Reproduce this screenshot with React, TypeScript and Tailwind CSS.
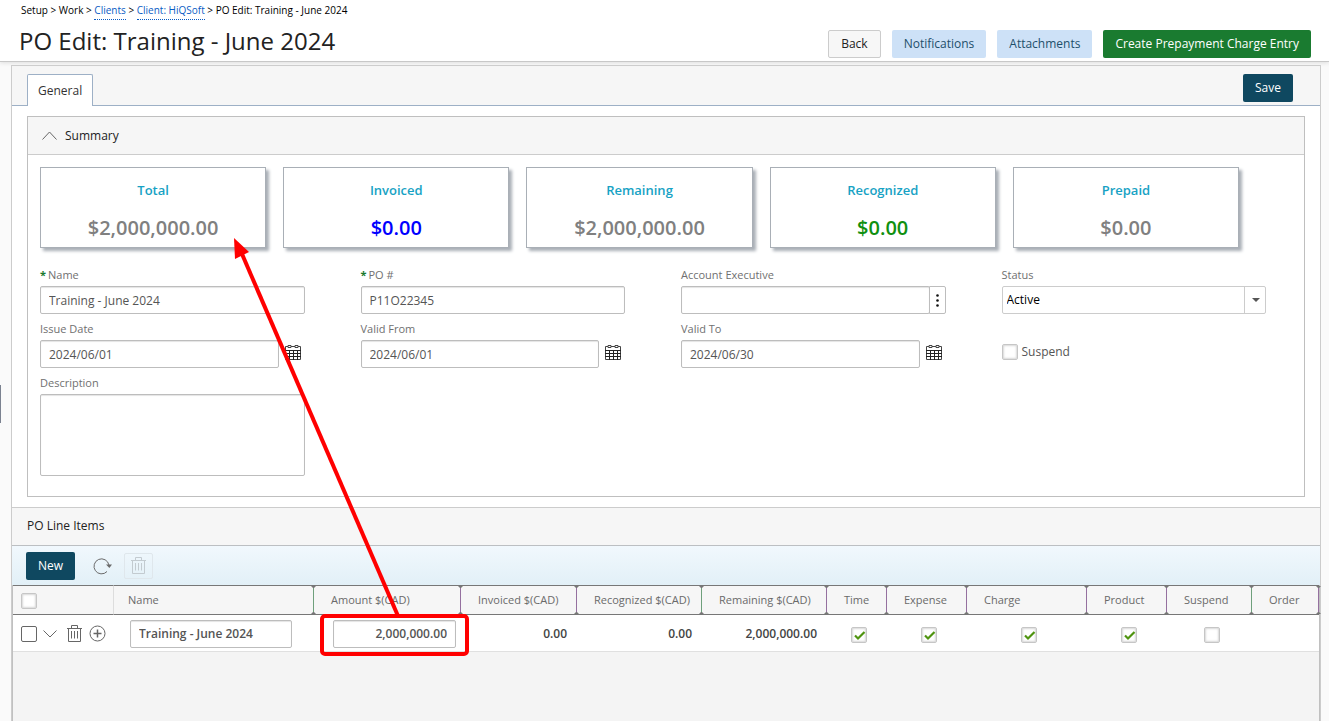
import React from "react";

const cards = [
  { title: "Total", value: "$2,000,000.00", color: "text-[#808080]" },
  { title: "Invoiced", value: "$0.00", color: "text-[#0000ff]" },
  { title: "Remaining", value: "$2,000,000.00", color: "text-[#808080]" },
  { title: "Recognized", value: "$0.00", color: "text-[#109010]" },
  { title: "Prepaid", value: "$0.00", color: "text-[#808080]" },
];

const columns = [
  { title: "Name", width: "w-[200px]", pad: "pl-[14px]", line: "text-[#6fa07c]" },
  { title: "Amount $(CAD)", width: "w-[147px]", pad: "pl-[17px]", line: "text-[#95709f]" },
  { title: "Invoiced $(CAD)", width: "w-[116px]", pad: "pl-[17px]", line: "text-[#95709f]" },
  { title: "Recognized $(CAD)", width: "w-[125px]", pad: "pl-[17px]", line: "text-[#6fa07c]" },
  { title: "Remaining $(CAD)", width: "w-[125px]", pad: "pl-[17px]", line: "text-[#95709f]" },
  { title: "Time", width: "w-[60px]", pad: "pl-[17px]", line: "text-[#95709f]" },
  { title: "Expense", width: "w-[80px]", pad: "pl-[17px]", line: "text-[#95709f]" },
  { title: "Charge", width: "w-[120px]", pad: "pl-[17px]", line: "text-[#95709f]" },
  { title: "Product", width: "w-[80px]", pad: "pl-[17px]", line: "text-[#95709f]" },
  { title: "Suspend", width: "w-[85px]", pad: "pl-[17px]", line: "text-[#6fa07c]" },
  { title: "Order", width: "", pad: "pl-[17px]", line: "text-[#95709f]" },
];

const inputClass =
  "h-7 w-full min-w-0 rounded-[2px] border border-[#bdbdbd] bg-white px-2 text-xs text-[#555] shadow-[inset_0_1px_1px_#e4e4e4] outline-none";

const CalendarIcon = () => (
  <svg width="16" height="17" viewBox="0 0 16 17" fill="none" stroke="#444">
    <path d="M0.5 2.5h15v13h-15z" />
    <path d="M0 6.5h16M0 9.5h16M0 12.5h16M4.5 7v9M8.5 7v9M12.5 7v9" stroke="#222" />
    <path d="M3 1.500h3v2h-3zM10 1.500h3v2h-3z" fill="#fff" />
  </svg>
);

const TrashIcon = () => (
  <svg width="15" height="17" viewBox="0 0 15 17" fill="none" stroke="currentColor">
    <path d="M0 3.5h15M4.5 3.500v-3h6v3M1.500 3.500v13h12v-13" />
    <path d="M4.500 6v7.500M7.500 6v7.500M10.500 6v7.500" />
  </svg>
);

const RefreshIcon = () => (
  <svg width="19" height="18" viewBox="0 0 19 18" fill="none" stroke="#6b6b6b">
    <path d="M14 14.500A7.500 7.500 0 1 1 15.900 8" />
    <path d="M13 7.500h6l-2.600 3.500z" fill="#6b6b6b" stroke="none" />
  </svg>
);

const Check = ({
  label,
  id,
  checked = false,
  dark = false,
}: {
  label?: string;
  id?: string;
  checked?: boolean;
  dark?: boolean;
}) => (
  <span className="inline-grid size-4 place-items-center align-middle">
    <input
      type="checkbox"
      id={id}
      aria-label={label}
      defaultChecked={checked}
      className={
        dark
          ? "peer col-start-1 row-start-1 size-4 appearance-none rounded-[2px] border border-[#666] bg-white"
          : "peer col-start-1 row-start-1 size-4 appearance-none rounded-[2px] border border-[#c6c6c6] bg-white shadow-[inset_0_0_2px_1px_#d8d8d8]"
      }
    />
    <svg
      className="pointer-events-none invisible col-start-1 row-start-1 peer-checked:visible"
      width="16"
      height="16"
      viewBox="0 0 16 16"
      fill="none"
      stroke="#4f9410"
      strokeWidth="2.2"
    >
      <path d="M4 8.500l3 3L13.500 5" />
    </svg>
  </span>
);

const Field = ({
  id,
  label,
  required = false,
  children,
}: {
  id: string;
  label: string;
  required?: boolean;
  children: React.ReactNode;
}) => (
  <div>
    <label htmlFor={id} className="flex h-[22px] items-center gap-[2px] text-[11px] text-[#707070]">
      {required && <span className="font-bold text-[#1a7a2e]">*</span>}
      <span className={required ? "font-medium" : ""}>{label}</span>
    </label>
    {children}
  </div>
);

const DateField = ({ id, label, value }: { id: string; label: string; value: string }) => (
  <Field id={id} label={label}>
    <div className="flex items-start gap-[6px] pr-1">
      <input id={id} className={inputClass} defaultValue={value} />
      <button aria-label={"Pick " + label} className="mt-1 shrink-0">
        <CalendarIcon />
      </button>
    </div>
  </Field>
);

const Header = () => (
  <header className="relative z-10 h-[62px] border-b border-[#c8c8c8] bg-white shadow-[0_1px_4px_#ddd]">
    <nav className="h-5 pl-[21px] text-[10px] leading-5 text-black">
      Setup &gt; Work &gt;{" "}
      <a href="#clients" className="inline-block h-5 border-b border-dotted border-[#0a5cc4] align-top text-[#0a5cc4]">
        Clients
      </a>{" "}
      &gt;{" "}
      <a href="#client" className="inline-block h-5 border-b border-dotted border-[#0a5cc4] align-top text-[#0a5cc4]">
        Client: HiQSoft
      </a>{" "}
      &gt; PO Edit: Training - June 2024
    </nav>
    <div className="flex items-start justify-between pr-[18px] pl-[19px]">
      <h1 className="text-2xl leading-[42px] text-[#222]">PO Edit: Training - June 2024</h1>
      <div className="flex gap-[11px] pt-[10px] text-xs">
        <button className="h-7 rounded-[2px] border border-[#ccc] bg-[#f7f7f7] px-3 text-[#222]">Back</button>
        <button className="h-7 rounded-[2px] bg-[#cde1f7] px-3 text-[#1d4f6b]">Notifications</button>
        <button className="h-7 rounded-[2px] bg-[#cde1f7] px-3 text-[#1d4f6b]">Attachments</button>
        <button className="h-7 rounded-[2px] bg-[#1a7b30] px-3 font-medium text-white">
          Create Prepayment Charge Entry
        </button>
      </div>
    </div>
  </header>
);

const Summary = () => (
  <section className="mx-[15px] my-[10px] border border-[#bfbfbf] bg-white">
    <h2 className="flex h-[38px] items-center gap-2 border-b border-[#ccc] bg-[#f6f6f6] pl-[14px] text-xs font-medium text-[#222]">
      <svg width="15" height="9" viewBox="0 0 15 9" fill="none" stroke="#666">
        <path d="M0.500 8.500L7.500 1L14.500 8.500" />
      </svg>
      Summary
    </h2>
    <div className="grid grid-cols-5 gap-[17px] pt-3 pr-[65px] pl-3">
      {cards.map((card) => (
        <div
          key={card.title}
          className="h-[81px] border border-[#a9afb6] bg-white text-center shadow-[3px_3px_3px_#a9afb6]"
        >
          <div className="pt-3 text-[13px] leading-5 font-semibold text-[#17a2c4]">{card.title}</div>
          <div className={"pt-[14px] text-xl leading-7 font-semibold " + card.color}>{card.value}</div>
        </div>
      ))}
    </div>
    <div className="grid grid-cols-4 gap-x-14 gap-y-1 pt-4 pr-[38px] pb-5 pl-3">
      <Field id="name" label="Name" required>
        <input id="name" className={inputClass} defaultValue="Training - June 2024" />
      </Field>
      <Field id="po" label="PO #" required>
        <input id="po" className={inputClass} defaultValue="P11O22345" />
      </Field>
      <Field id="executive" label="Account Executive">
        <div className="flex">
          <input id="executive" className={inputClass} />
          <button
            aria-label="Select account executive"
            className="-ml-px flex h-7 w-[17px] shrink-0 items-center justify-center rounded-r-[2px] border border-[#bdbdbd] bg-white"
          >
            <svg width="3" height="13" viewBox="0 0 3 13" fill="#111">
              <circle cx="1.500" cy="1.500" r="1.300" />
              <circle cx="1.500" cy="6.500" r="1.300" />
              <circle cx="1.500" cy="11.500" r="1.300" />
            </svg>
          </button>
        </div>
      </Field>
      <Field id="status" label="Status">
        <div className="grid">
          <select
            id="status"
            className="col-start-1 row-start-1 h-7 w-full appearance-none rounded-[2px] border border-[#ccc] bg-white pl-1 text-xs text-black"
          >
            <option>Active</option>
          </select>
          <span className="pointer-events-none col-start-1 row-start-1 flex h-7 w-[22px] items-center justify-center justify-self-end border-l border-[#ccc]">
            <svg width="8" height="4" viewBox="0 0 8 4" fill="#555">
              <path d="M0 0h8L4 4z" />
            </svg>
          </span>
        </div>
      </Field>
      <DateField id="issue" label="Issue Date" value="2024/06/01" />
      <DateField id="from" label="Valid From" value="2024/06/01" />
      <DateField id="to" label="Valid To" value="2024/06/30" />
      <div className="mt-[22px] flex h-6 items-center gap-1 text-xs text-[#555]">
        <Check id="suspend" />
        <label htmlFor="suspend">Suspend</label>
      </div>
      <Field id="description" label="Description">
        <textarea
          id="description"
          className="block h-[82px] w-full resize-none rounded-[2px] border border-[#bdbdbd] bg-white shadow-[inset_0_1px_1px_#e4e4e4]"
        />
      </Field>
    </div>
  </section>
);

const LineItems = () => (
  <section className="flex grow flex-col border-t border-[#ccc] bg-[#f4f4f4]">
    <h2 className="h-[38px] border-b border-[#bcbfc2] bg-[#f6f6f6] pl-[15px] text-xs leading-9 font-medium text-[#222]">
      PO Line Items
    </h2>
    <div className="flex h-[39px] items-center bg-linear-to-b from-[#f1f8fd] to-[#e2f0f7] pl-[14px]">
      <button className="h-7 rounded-[2px] bg-[#0f4860] px-3 text-xs font-medium text-white">New</button>
      <button aria-label="Refresh" className="ml-[18px]">
        <RefreshIcon />
      </button>
      <button
        aria-label="Delete selected"
        disabled
        className="ml-3 flex h-[26px] w-[29px] items-center justify-center rounded-[2px] border border-[#dfe7ec] text-[#c3cbd0]"
      >
        <TrashIcon />
      </button>
    </div>
    <div className="grow border-x border-[#c0c0c0]">
      <table className="w-full table-fixed border-separate border-spacing-0 text-left text-[11px] text-[#6a6a6a]">
        <thead>
          <tr className="h-[30px]">
            <th className="w-[101px] border-y border-r border-y-[#777] border-r-[#ddd] bg-[#f6f6f6] p-0 pl-2">
              <Check label="Select all" />
            </th>
            {columns.map((col) => (
              <th
                key={col.title}
                className={"relative border-y border-[#777] bg-[#f6f6f6] p-0 font-normal " + col.width + " " + col.pad}
              >
                {col.title}
                <svg
                  className={"absolute top-0 -right-[2px] z-10 " + col.line}
                  width="5"
                  height="28"
                  viewBox="0 0 5 28"
                  fill="currentColor"
                >
                  <path d="M2 0h1v28h-1z" />
                  <path d="M0 0h5L3 2h-1zM0 28h5L3 26h-1z" fill="#777" />
                </svg>
              </th>
            ))}
          </tr>
        </thead>
        <tbody className="text-xs font-semibold text-[#444]">
          <tr className="h-[37px] bg-white">
            <td className="border-b border-[#e0e0e0] p-0 pt-px pl-2">
              <div className="flex items-center text-[#666]">
                <Check label="Select row" dark />
                <button aria-label="Expand row" className="ml-[6px]">
                  <svg width="14" height="8" viewBox="0 0 14 8" fill="none" stroke="currentColor">
                    <path d="M0.500 0.500L7 7L13.500 0.500" />
                  </svg>
                </button>
                <button aria-label="Delete row" className="ml-[10px]">
                  <TrashIcon />
                </button>
                <button aria-label="Add row" className="ml-[7px]">
                  <svg width="17" height="17" viewBox="0 0 17 17" fill="none" stroke="currentColor">
                    <circle cx="8.500" cy="8.500" r="7.500" />
                    <path d="M4.500 8.500h8M8.500 4.500v8" strokeWidth="1.500" />
                  </svg>
                </button>
              </div>
            </td>
            <td className="border-b border-[#e0e0e0] p-0 pt-px pr-[22px] pl-4">
              <input aria-label="Item name" className={inputClass} defaultValue="Training - June 2024" />
            </td>
            <td className="border-b border-[#e0e0e0] p-0 pt-px pr-[5px] pl-[19px]">
              <input aria-label="Amount" className={inputClass + " text-right"} defaultValue="2,000,000.00" />
            </td>
            <td className="border-b border-[#e0e0e0] p-0 pt-[2px] pr-[10px] text-right">0.00</td>
            <td className="border-b border-[#e0e0e0] p-0 pt-[2px] pr-[10px] text-right">0.00</td>
            <td className="border-b border-[#e0e0e0] p-0 pt-[2px] pr-[10px] text-right">2,000,000.00</td>
            <td className="border-b border-[#e0e0e0] p-0 pt-1 pl-1 text-center">
              <Check label="Time" checked />
            </td>
            <td className="border-b border-[#e0e0e0] p-0 pt-1 pl-1 text-center">
              <Check label="Expense" checked />
            </td>
            <td className="border-b border-[#e0e0e0] p-0 pt-1 pl-1 text-center">
              <Check label="Charge" checked />
            </td>
            <td className="border-b border-[#e0e0e0] p-0 pt-1 pl-1 text-center">
              <Check label="Product" checked />
            </td>
            <td className="border-b border-[#e0e0e0] p-0 pt-1 pl-1 text-center">
              <Check label="Suspend" />
            </td>
            <td className="border-b border-[#e0e0e0] p-0" />
          </tr>
        </tbody>
      </table>
    </div>
  </section>
);

// red marker over the page: framed amount and the arrow up to the total
const Marker = () => (
  <svg
    className="pointer-events-none absolute top-0 left-0 z-20"
    width="480"
    height="670"
    viewBox="0 0 480 670"
    fill="none"
    stroke="#ff0000"
    strokeWidth="4"
  >
    <path d="M398 616L242 254" />
    <path d="M234 238L249 252L235 259z" fill="#ff0000" stroke="none" />
    <rect x="322" y="616" width="145" height="38" rx="3" />
  </svg>
);

export default function App() {
  return (
    <div className="relative flex min-h-screen flex-col overflow-hidden bg-[#fafafa] font-['Open_Sans',sans-serif]">
      <Header />
      <div className="absolute top-[385px] left-0 h-[38px] w-px bg-[#7b8290]" />
      <main className="mt-[3px] mr-2 ml-[11px] flex grow flex-col border border-b-0 border-[#ccc] bg-white">
        <div className="flex h-10 items-start justify-between border-b border-[#9db0c6] bg-[#f6f6f6] pt-2 pr-[27px] pl-[15px]">
          <button className="h-8 rounded-t-[2px] border border-b-0 border-[#9db0c6] bg-white px-[10px] text-xs font-medium text-[#333]">
            General
          </button>
          <button className="h-7 rounded-[2px] bg-[#0f4860] px-3 text-xs font-medium text-white">Save</button>
        </div>
        <Summary />
        <LineItems />
      </main>
      <Marker />
    </div>
  );
}
